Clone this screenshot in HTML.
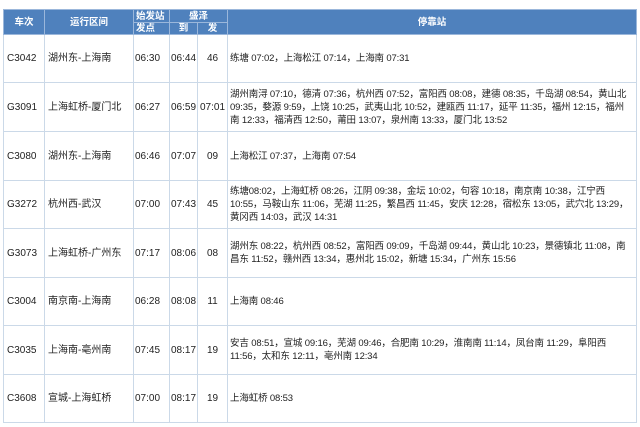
<!DOCTYPE html>
<html><head><meta charset="utf-8"><style>
*{margin:0;padding:0;box-sizing:border-box}
body{width:640px;height:427px;background:#fff;font-family:"Liberation Sans","Noto Sans CJK SC",sans-serif;color:#222;position:relative;overflow:hidden}
table{position:absolute;left:3px;top:9px;border-collapse:collapse;table-layout:fixed;width:634px;font-size:10px}
td,th{border:1px solid #cbd9e8;padding:0 0 0 3px;text-align:left;white-space:nowrap;vertical-align:middle;line-height:13px;overflow:hidden}
th{background:#4f81bd;color:#fff;font-weight:bold;border-color:#9bb7db;font-size:9.5px;text-align:center;padding:0;line-height:11px}
th.l{text-align:left;padding-left:2px}
td.c{text-align:center;padding:0}
td.t{padding-left:1px}
td.s{padding-left:2px;font-size:9.5px;letter-spacing:-0.15px}
</style></head><body>
<table>
<colgroup><col style="width:41px"><col style="width:89px"><col style="width:36px"><col style="width:28px"><col style="width:30px"><col></colgroup>
<tr style="height:13px"><th rowspan="2">车次</th><th rowspan="2">运行区间</th><th class="l">始发站</th><th colspan="2">盛泽</th><th rowspan="2">停靠站</th></tr>
<tr style="height:12px"><th class="l">发点</th><th>到</th><th>发</th></tr>
<tr style="height:48px"><td>C3042</td><td>湖州东-上海南</td><td class="t">06:30</td><td class="t">06:44</td><td class="c">46</td><td class="s">练塘 07:02，上海松江 07:14，上海南 07:31</td></tr>
<tr style="height:49px"><td>G3091</td><td>上海虹桥-厦门北</td><td class="t">06:27</td><td class="t">06:59</td><td class="c">07:01</td><td class="s">湖州南浔 07:10，德清 07:36，杭州西 07:52，富阳西 08:08，建德 08:35，千岛湖 08:54，黄山北<br>09:35，婺源 9:59，上饶 10:25，武夷山北 10:52，建瓯西 11:17，延平 11:35，福州 12:15，福州<br>南 12:33，福清西 12:50，莆田 13:07，泉州南 13:33，厦门北 13:52</td></tr>
<tr style="height:49px"><td>C3080</td><td>湖州东-上海南</td><td class="t">06:46</td><td class="t">07:07</td><td class="c">09</td><td class="s">上海松江 07:37，上海南 07:54</td></tr>
<tr style="height:48px"><td>G3272</td><td>杭州西-武汉</td><td class="t">07:00</td><td class="t">07:43</td><td class="c">45</td><td class="s">练塘08:02，上海虹桥 08:26，江阴 09:38，金坛 10:02，句容 10:18，南京南 10:38，江宁西<br>10:55，马鞍山东 11:06，芜湖 11:25，繁昌西 11:45，安庆 12:28，宿松东 13:05，武穴北 13:29，<br>黄冈西 14:03，武汉 14:31</td></tr>
<tr style="height:49px"><td>G3073</td><td>上海虹桥-广州东</td><td class="t">07:17</td><td class="t">08:06</td><td class="c">08</td><td class="s">湖州东 08:22，杭州西 08:52，富阳西 09:09，千岛湖 09:44，黄山北 10:23，景德镇北 11:08，南<br>昌东 11:52，赣州西 13:34，惠州北 15:02，新塘 15:34，广州东 15:56</td></tr>
<tr style="height:48px"><td>C3004</td><td>南京南-上海南</td><td class="t">06:28</td><td class="t">08:08</td><td class="c">11</td><td class="s">上海南 08:46</td></tr>
<tr style="height:49px"><td>C3035</td><td>上海南-亳州南</td><td class="t">07:45</td><td class="t">08:17</td><td class="c">19</td><td class="s">安吉 08:51，宣城 09:16，芜湖 09:46，合肥南 10:29，淮南南 11:14，凤台南 11:29，阜阳西<br>11:56，太和东 12:11，亳州南 12:34</td></tr>
<tr style="height:48px"><td>C3608</td><td>宣城-上海虹桥</td><td class="t">07:00</td><td class="t">08:17</td><td class="c">19</td><td class="s">上海虹桥 08:53</td></tr>
</table>
</body></html>
